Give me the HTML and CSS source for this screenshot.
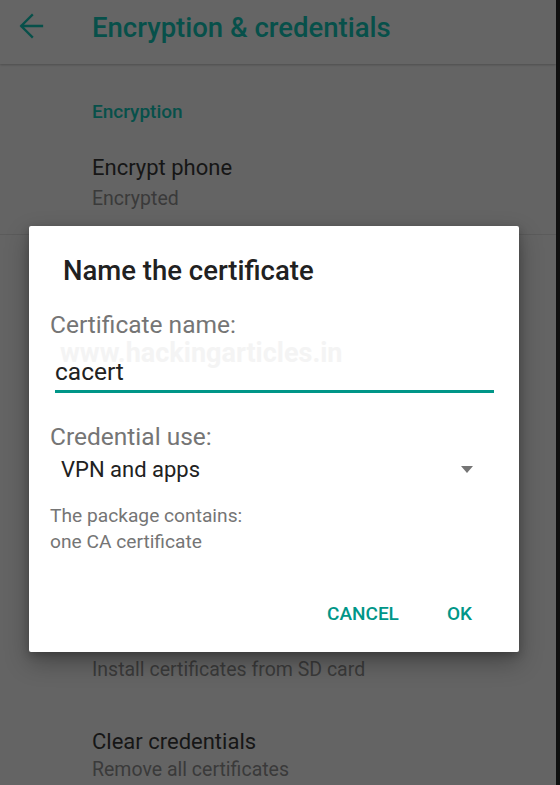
FILE: index.html
```html
<!DOCTYPE html>
<html>
<head>
<meta charset="utf-8">
<link rel="stylesheet" href="styles.css">
</head>
<body>
<div class="screen">
  <div class="app">
    <header class="toolbar">
      <svg class="back" width="32" height="32" viewBox="0 0 32 32"><path d="M26 16H5.5M16 5.2L5.2 16 16 26.8" fill="none" stroke="#07504a" stroke-width="2.3" stroke-linecap="square"/></svg>
      <h1 class="title">Encryption &amp; credentials</h1>
    </header>
    <section class="section">
      <div class="section-head">Encryption</div>
      <div class="item">
        <div class="item-title">Encrypt phone</div>
        <div class="item-sub">Encrypted</div>
      </div>
    </section>
    <section class="section section-2">
      <div class="item item-low">
        <div class="item-sub">Install certificates from SD card</div>
      </div>
      <div class="item item-clear">
        <div class="item-title">Clear credentials</div>
        <div class="item-sub">Remove all certificates</div>
      </div>
    </section>

    <div class="dialog">
      <h2 class="dlg-title">Name the certificate</h2>
      <div class="label">Certificate name:</div>
      <div class="field">
        <span class="watermark">www.hackingarticles.in</span>
        <div class="value">cacert</div>
      </div>
      <div class="label label-2">Credential use:</div>
      <div class="select">
        <span class="select-value">VPN and apps</span>
        <span class="caret"></span>
      </div>
      <div class="note">The package contains:<br>one CA certificate</div>
      <div class="actions">
        <span class="btn">CANCEL</span>
        <span class="btn">OK</span>
      </div>
    </div>
  </div>
  <div class="edge"></div>
</div>
</body>
</html>
```
FILE: styles.css
```css
* { box-sizing: border-box; }
html, body { margin: 0; padding: 0; }
body {
  font-family: Roboto, "Noto Sans", "Liberation Sans", sans-serif;
  background: #101010;
  width: 560px;
  height: 785px;
  overflow: hidden;
}
.screen {
  display: flex;
  width: 560px;
  height: 785px;
}
.app {
  position: relative;
  width: 556px;
  height: 785px;
  background: #646464;
  overflow: hidden;
}
.edge {
  width: 4px;
  background: #101010;
}
.toolbar {
  height: 64px;
  display: flex;
  align-items: flex-start;
  background: #656565;
  box-shadow: 0 1px 2px rgba(0,0,0,0.22);
  position: relative;
}
.back {
  margin: 10px 0 0 16px;
  flex: none;
}
.title {
  margin: 12px 0 0 44px;
  font-size: 27.5px;
  line-height: 32px;
  font-weight: 500;
  color: #07504a;
}
.section {
  padding-left: 92px;
}
.section-head {
  padding-top: 36px;
  font-size: 19px;
  font-weight: 500;
  color: #07504a;
  line-height: 24px;
}
.item-title {
  font-size: 22px;
  color: #161616;
  line-height: 28px;
}
.item-sub {
  margin-top: 5px;
  font-size: 19.5px;
  color: #3a3a3a;
  line-height: 24px;
}
.section .item { padding-top: 30px; }
.section-2 {
  border-top: 1px solid #5b5b5b;
  margin-top: 23px;
}
.section-2 .item-low { padding-top: 423px; }
.section-2 .item-low .item-sub { margin-top: 0; }
.section-2 .item-clear { padding-top: 46px; }
.section-2 .item-clear .item-sub { margin-top: 2px; }

.dialog {
  position: absolute;
  left: 29px;
  top: 226px;
  width: 490px;
  height: 426px;
  background: #fff;
  border-radius: 2px;
  box-shadow: 0 10px 24px rgba(0,0,0,0.3), 0 3px 8px rgba(0,0,0,0.22);
  padding: 0 25px 0 21px;
}
.dlg-title {
  margin: 29px 0 0 13px;
  font-size: 27.5px;
  font-weight: 500;
  color: #212121;
  line-height: 32px;
}
.label {
  margin-top: 23px;
  font-size: 24.5px;
  color: #757575;
  line-height: 30px;
}
.field {
  position: relative;
  margin-left: 5px;
  height: 53px;
  border-bottom: 3px solid #009688;
  padding-top: 17px;
}
.watermark {
  position: absolute;
  left: 5px;
  top: -1px;
  font-size: 27px;
  font-weight: 700;
  color: #f4f4f4;
  line-height: 28px;
  white-space: nowrap;
}
.value {
  position: relative;
  font-size: 24.5px;
  color: #212121;
  line-height: 30px;
}
.label-2 { margin-top: 29px; }
.select {
  display: flex;
  align-items: center;
  justify-content: space-between;
  height: 30px;
  margin-top: 3px;
  padding-left: 11px;
  padding-right: 21px;
}
.select-value {
  font-size: 22px;
  color: #212121;
  line-height: 30px;
}
.caret {
  width: 0;
  height: 0;
  margin-top: -2px;
  border-left: 6.5px solid transparent;
  border-right: 6.5px solid transparent;
  border-top: 7px solid #757575;
}
.note {
  margin-top: 18px;
  font-size: 19.2px;
  color: #757575;
  line-height: 26px;
}
.actions {
  display: flex;
  justify-content: flex-end;
  gap: 48px;
  margin-top: 47px;
  padding-right: 22px;
}
.btn {
  font-size: 19px;
  font-weight: 500;
  color: #009688;
  line-height: 24px;
}
```
